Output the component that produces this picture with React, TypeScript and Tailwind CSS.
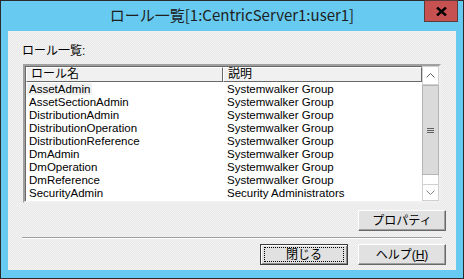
import React from "react";

const rows: [string, string][] = [
  ["AssetAdmin", "Systemwalker Group"],
  ["AssetSectionAdmin", "Systemwalker Group"],
  ["DistributionAdmin", "Systemwalker Group"],
  ["DistributionOperation", "Systemwalker Group"],
  ["DistributionReference", "Systemwalker Group"],
  ["DmAdmin", "Systemwalker Group"],
  ["DmOperation", "Systemwalker Group"],
  ["DmReference", "Systemwalker Group"],
  ["SecurityAdmin", "Security Administrators"],
  ["SecurityAuditor", "Security Auditors"],
];

const font = { fontFamily: '"Liberation Sans", "Noto Sans CJK JP", sans-serif' };

function Btn({ children, def }: { children: React.ReactNode; def?: boolean }) {
  return (
    <div
      className={
        "w-[88px] h-[21px] flex items-center justify-center bg-[#e1e1e1] text-[12px] text-black " +
        (def
          ? "border border-[#3c3c3c] shadow-[inset_1px_1px_0_#fff,inset_-1px_-1px_0_#8c8c8c]"
          : "border border-t-[#fff] border-l-[#fff] border-r-[#696969] border-b-[#696969] shadow-[inset_-1px_-1px_0_#a0a0a0]")
      }
    >
      {def ? (
        <div className="w-[80px] h-[15px] border border-dotted border-black flex items-center justify-center">
          {children}
        </div>
      ) : (
        children
      )}
    </div>
  );
}

export default function App() {
  return (
    <div
      className="w-[464px] h-[279px] border border-[#2b2b2b] bg-[#67caf0] flex flex-col relative"
      style={font}
    >
      <div className="h-[30px] flex items-center justify-center text-[15px] text-[#1e1e1e] pb-[1px]" style={{ fontFamily: '"Noto Sans CJK JP", sans-serif' }}>
        ロール一覧[1:CentricServer1:user1]
      </div>
      <div className="absolute top-[-1px] left-[423px] w-[34px] h-[22px] bg-[#c75050] border border-[#5a3a3a] flex items-center justify-center">
        <svg width="11" height="9" viewBox="0 0 11 9">
          <path d="M1 0.5 L10 8.5 M10 0.5 L1 8.5" stroke="#000" strokeWidth="2.4" />
        </svg>
      </div>
      <div className="mx-[7px] h-[239px] bg-[repeating-conic-gradient(#f2f2f2_0_25%,#e9e9e9_0_50%)] bg-[length:2px_2px] flex flex-col pl-[15px] pr-[13px] pt-[13px]">
        <div className="text-[12px] leading-[14px] text-black h-[20px] -ml-[1px]">ロール一覧:</div>
        <div className="w-[418px] h-[139px] border-2 border-t-[#a0a0a0] border-l-[#a0a0a0] border-r-[#f0f0f0] border-b-[#f0f0f0] shadow-[inset_1px_1px_0_#696969] bg-white flex">
          <div className="flex-1 overflow-hidden flex flex-col pl-[1px] pt-[1px]">
            <div className="h-[15px] flex shrink-0 text-[12px] leading-[13px]">
              <div className="w-[197px] bg-[#f0f0f0] border border-t-white border-l-white border-r-[#696969] border-b-[#696969] pl-[4px]">ロール名</div>
              <div className="w-[199px] bg-[#f0f0f0] border border-t-white border-l-white border-r-[#696969] border-b-[#696969] pl-[4px]">説明</div>
            </div>
            <div className="pt-[1px]">
              {rows.map(([a, b], i) => (
                <div key={a} className="h-[13px] flex text-[11.5px] leading-[13px] text-black">
                  <div className="w-[197px] pl-[1px]">
                    <span className={"px-[2px] " + (i === 0 ? "bg-[#f0f0f0]" : "")}>{a}</span>
                  </div>
                  <div className="pl-[4px]">{b}</div>
                </div>
              ))}
            </div>
          </div>
          <div className="w-[17px] flex flex-col bg-white">
            <div className="h-[19px] border border-[#d0d0d0] flex items-center justify-center">
              <svg width="9" height="5" viewBox="0 0 9 5">
                <path d="M0.5 4.5 L4.5 0.5 L8.5 4.5" stroke="#606060" fill="none" />
              </svg>
            </div>
            <div className="h-[90px] bg-[#dadada] border border-[#b4b4b4] flex flex-col items-center justify-center gap-[1px]">
              <div className="w-[7px] h-[1px] bg-[#606060]" />
              <div className="w-[7px] h-[1px] bg-[#606060]" />
              <div className="w-[7px] h-[1px] bg-[#606060]" />
            </div>
            <div className="flex-1 border-x border-[#d0d0d0]" />
            <div className="h-[17px] border border-[#d0d0d0] flex items-center justify-center">
              <svg width="9" height="5" viewBox="0 0 9 5">
                <path d="M0.5 0.5 L4.5 4.5 L8.5 0.5" stroke="#808080" fill="none" />
              </svg>
            </div>
          </div>
        </div>
        <div className="flex justify-end mt-[7px] -mr-[3px]">
          <Btn>プロパティ</Btn>
        </div>
        <div className="mt-[6px] h-[2px] border-t border-[#a0a0a0] border-b border-b-white -ml-[1px] mr-[1px]" />
        <div className="flex justify-end gap-[10px] mt-[5px] -mr-[3px]">
          <Btn def>閉じる</Btn>
          <Btn>
            <span>
              ヘルプ(<span className="underline">H</span>)
            </span>
          </Btn>
        </div>
      </div>
    </div>
  );
}
